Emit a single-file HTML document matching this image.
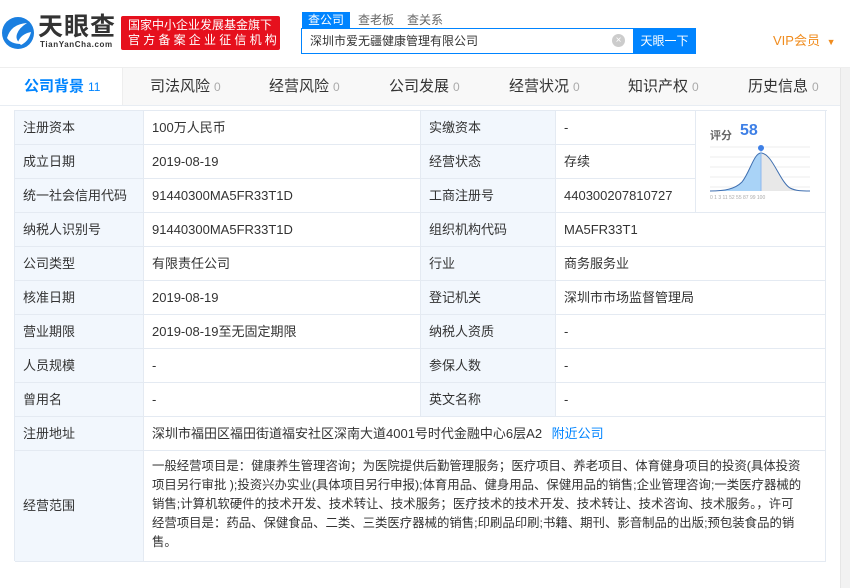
<!DOCTYPE html>
<html><head><meta charset="utf-8">
<style>
*{margin:0;padding:0;box-sizing:border-box}
body{width:850px;height:588px;overflow:hidden;background:#fff;font-family:"Liberation Sans","Noto Sans CJK SC",sans-serif;color:#333;font-size:13px;position:relative}
.a{position:absolute}
.cell{position:absolute;border-right:1px solid #e4eaf2;border-bottom:1px solid #e4eaf2;padding-left:8px;line-height:33px;white-space:nowrap}
.lb{background:#f2f7fd}
.tab{position:absolute;top:68px;height:37px;line-height:37px;font-size:15px;color:#333;text-align:center}
.tab span{font-size:12px;color:#aaa;margin-left:4px}
</style></head><body>
<svg class="a" style="left:1px;top:16px" width="34" height="34" viewBox="0 0 34 34">
<circle cx="17" cy="17" r="16" fill="#1a7fe0"/>
<path d="M6 22 Q10 8 26 7 Q18 12 16 18 Q14 24 20 28 Q10 28 6 22Z" fill="#fff"/>
<path d="M17 26 Q20 18 30 16 Q28 25 20 29Z" fill="#fff"/>
</svg>
<div class="a" style="left:38px;top:12px;font-size:25px;font-weight:bold;color:#333;letter-spacing:1px;line-height:30px">天眼查</div>
<div class="a" style="left:40px;top:40px;font-size:8px;font-weight:bold;color:#333;letter-spacing:0.6px">TianYanCha.com</div>
<div class="a" style="left:121px;top:16px;width:159px;height:34px;background:#e6101d;border-radius:2px;color:#fff;font-size:12px;line-height:15px;padding:2px 0 0 7px">国家中小企业发展基金旗下<br><span style="letter-spacing:3.2px">官方备案企业征信机构</span></div>
<div class="a" style="left:302px;top:12px;width:48px;height:16px;background:#0084ff;color:#fff;font-size:12px;line-height:16px;text-align:center">查公司</div>
<div class="a" style="left:358px;top:12px;font-size:12px;color:#666;line-height:16px">查老板</div>
<div class="a" style="left:407px;top:12px;font-size:12px;color:#666;line-height:16px">查关系</div>
<div class="a" style="left:301px;top:28px;width:333px;height:26px;border:1px solid #0084ff;border-right:none;padding-left:8px;line-height:24px;font-size:12px;color:#333">深圳市爱无疆健康管理有限公司</div>
<div class="a" style="left:612px;top:34px;width:13px;height:13px;border-radius:50%;background:#ccc;color:#fff;font-size:10px;line-height:13px;text-align:center">×</div>
<div class="a" style="left:633px;top:28px;width:63px;height:26px;background:#0084ff;color:#fff;font-size:12px;line-height:26px;text-align:center">天眼一下</div>
<div class="a" style="left:773px;top:32px;font-size:13px;color:#f08c1e;line-height:18px">VIP会员 <span style="font-size:9px;margin-left:3px">▼</span></div>
<div class="a" style="left:0;top:67px;width:850px;height:39px;background:#f8f8f8;border-top:1px solid #eee;border-bottom:1px solid #e8edf3"></div>
<div class="a" style="left:0;top:68px;width:123px;height:37px;background:#fff;border-right:1px solid #eee"></div>
<div class="tab" style="left:24px;color:#0084ff;font-weight:bold">公司背景<span style="color:#0084ff;font-weight:normal">11</span></div>
<div class="tab" style="left:150px">司法风险<span>0</span></div>
<div class="tab" style="left:269px">经营风险<span>0</span></div>
<div class="tab" style="left:389px">公司发展<span>0</span></div>
<div class="tab" style="left:509px">经营状况<span>0</span></div>
<div class="tab" style="left:628px">知识产权<span>0</span></div>
<div class="tab" style="left:748px">历史信息<span>0</span></div>
<div class="a" style="left:840px;top:68px;width:10px;height:520px;background:#f2f2f2;border-left:1px solid #e6e6e6"></div>
<div class="a" style="left:14px;top:110px;width:813px;height:451px;border-left:1px solid #e4eaf2;border-top:1px solid #e4eaf2"></div>
<div id="t"></div>
<script>
var rows=[["注册资本","100万人民币","实缴资本","-"],["成立日期","2019-08-19","经营状态","存续"],["统一社会信用代码","91440300MA5FR33T1D","工商注册号","440300207810727"],["纳税人识别号","91440300MA5FR33T1D","组织机构代码","MA5FR33T1"],["公司类型","有限责任公司","行业","商务服务业"],["核准日期","2019-08-19","登记机关","深圳市市场监督管理局"],["营业期限","2019-08-19至无固定期限","纳税人资质","-"],["人员规模","-","参保人数","-"],["曾用名","-","英文名称","-"]];
var h="";
rows.forEach(function(r,i){var y=111+i*34;var w4=i<3?140:270;
h+='<div class="cell lb" style="left:15px;top:'+y+'px;width:129px;height:34px">'+r[0]+'</div>';
h+='<div class="cell" style="left:144px;top:'+y+'px;width:277px;height:34px">'+r[1]+'</div>';
h+='<div class="cell lb" style="left:421px;top:'+y+'px;width:135px;height:34px">'+r[2]+'</div>';
h+='<div class="cell" style="left:556px;top:'+y+'px;width:'+w4+'px;height:34px">'+r[3]+'</div>';});
var y=111+9*34;
h+='<div class="cell lb" style="left:15px;top:'+y+'px;width:129px;height:34px">注册地址</div>';
h+='<div class="cell" style="left:144px;top:'+y+'px;width:682px;height:34px">深圳市福田区福田街道福安社区深南大道4001号时代金融中心6层A2 <span style="color:#0084ff;margin-left:6px">附近公司</span></div>';
y+=34;
h+='<div class="cell lb" style="left:15px;top:'+y+'px;width:129px;height:111px;line-height:110px">经营范围</div>';
h+='<div class="cell" style="left:144px;top:'+y+'px;width:682px;height:111px;line-height:19px;padding:6px 8px 0 8px;font-size:12.4px;overflow:hidden">一般经营项目是：健康养生管理咨询；为医院提供后勤管理服务；医疗项目、养老项目、体育健身项目的投资(具体投资<br>项目另行审批 );投资兴办实业(具体项目另行申报);体育用品、健身用品、保健用品的销售;企业管理咨询;一类医疗器械的<br>销售;计算机软硬件的技术开发、技术转让、技术服务；医疗技术的技术开发、技术转让、技术咨询、技术服务。，许可<br>经营项目是：药品、保健食品、二类、三类医疗器械的销售;印刷品印刷;书籍、期刊、影音制品的出版;预包装食品的销<br>售。</div>';
document.getElementById('t').innerHTML=h;
</script>
<div class="a" style="left:696px;top:111px;width:130px;height:102px;border-right:1px solid #e4eaf2;border-bottom:1px solid #e4eaf2;background:#fff"></div>
<div class="a" style="left:710px;top:127px;font-size:11px;color:#666;font-weight:bold">评分</div>
<div class="a" style="left:740px;top:122px;font-size:16px;color:#3d7fe6;font-weight:bold">58</div>
<svg class="a" style="left:710px;top:142px" width="104" height="60" viewBox="0 0 104 60">
<g stroke="#eee" stroke-width="1"><line x1="0" y1="5" x2="100" y2="5"/><line x1="0" y1="15" x2="100" y2="15"/><line x1="0" y1="25" x2="100" y2="25"/><line x1="0" y1="35" x2="100" y2="35"/><line x1="0" y1="45" x2="100" y2="45"/></g>
<path d="M51 11 C62 11 70 40 80 46 C86 49 92 49 100 49 L51 49Z" fill="#e8e8e8"/>
<path d="M0 49 C15 49 25 47 32 40 C40 30 44 11 51 11 L51 49Z" fill="#a9d3f7"/>
<path d="M0 49 C15 49 25 47 32 40 C40 30 44 11 51 11 C62 11 70 40 80 46 C86 49 92 49 100 49" fill="none" stroke="#3f6fb0" stroke-width="1"/>
<line x1="51" y1="8" x2="51" y2="49" stroke="#8fb8ee" stroke-width="1"/>
<circle cx="51" cy="6" r="3" fill="#3d7fe6"/>
<text x="0" y="57" font-size="5" fill="#aaa" font-family="Liberation Sans">0    1    3    11   52   55   87   99  100</text>
</svg>
</body></html>
